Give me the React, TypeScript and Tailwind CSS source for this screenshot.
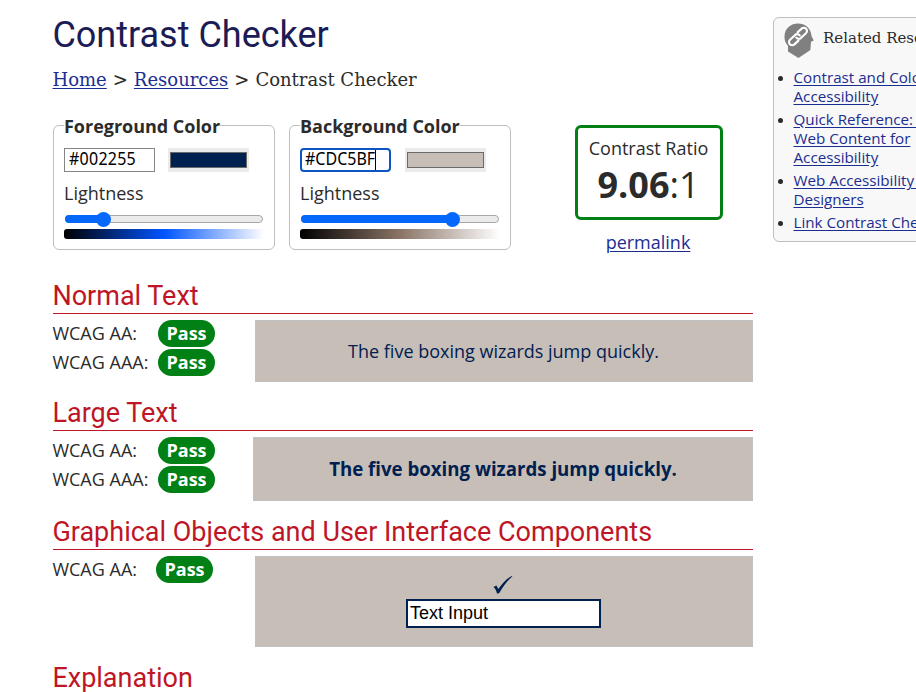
import React from "react";

type PickerProps = {
  title: string;
  value: string;
  focused?: boolean;
  swatch: string;
  gradient: string;
  fill: string;
};

function ColorPicker({ title, value, focused, swatch, gradient, fill }: PickerProps) {
  return (
    <fieldset className="h-[133px] w-[222px] rounded-[6px] border border-[#bfbfbf] px-[10px]">
      <legend className="h-[17px] whitespace-nowrap text-[18px] leading-[19px] font-bold tracking-[-0.02px]">{title}</legend>
      <div className={"mt-[14px] flex h-6 " + (focused ? "gap-[14px]" : "gap-[13px]")}>
        <div
          className={
            focused
              ? "flex w-[91px] rounded-[4px] border-2 border-[#0a56c4] bg-white pl-[3px] text-black"
              : "flex w-[91px] border border-[#858585] bg-white pt-px pl-1 tracking-[0.25px] text-black"
          }
        >
          <span className="origin-bottom scale-y-[1.08] font-['Noto_Sans','Open_Sans',sans-serif] text-[16px] leading-[18px]">{value}</span>
          {focused && <span className="h-5 w-px bg-black" />}
        </div>
        <div className="w-[81px] bg-[#ebebeb] px-[2px] py-1">
          <div className={"h-4 border border-[#6b6b6b] " + swatch} />
        </div>
      </div>
      <div className="mt-[8px] h-[26px] text-[18px] leading-[26px]">Lightness</div>
      <div className="mx-px mt-[9px] flex h-2 items-center rounded-full border border-[#a8a8a8] bg-[#ebebeb]">
        <div className={"-ml-px flex h-2 shrink-0 items-center justify-end rounded-full bg-[#0568fd] " + fill}>
          <span className="-mr-[7px] h-[15px] w-[15px] shrink-0 rounded-full bg-[#0568fd]" />
        </div>
      </div>
      <div className={"mt-[6px] h-[10px] rounded-[3px] bg-linear-to-r/srgb " + gradient} />
    </fieldset>
  );
}

function Heading({ children }: { children: React.ReactNode }) {
  return (
    <h2 className="h-[36px] border-b border-[#be1626] -indent-[0.6px] font-['Roboto',sans-serif] text-[27px] leading-[37px] whitespace-nowrap text-[#be1626]">
      {children}
    </h2>
  );
}

function Level({ name, width }: { name: string; width: string }) {
  return (
    <div className="flex h-[27px] items-center">
      <span className={"-indent-[0.6px] text-[18px] leading-[27px] whitespace-nowrap " + width}>{name}</span>
      <span className="h-[27px] w-[57px] rounded-full bg-[#008015] text-center text-[18px] leading-[27px] font-bold text-white">Pass</span>
    </div>
  );
}

const linkStyle = "text-[#1c2d91] underline underline-offset-2";

const related = [
  ["Contrast and Color", "Accessibility"],
  ["Quick Reference: Testing", "Web Content for", "Accessibility"],
  ["Web Accessibility for", "Designers"],
  ["Link Contrast Checker"],
];

function LinkHeadIcon() {
  return (
    <svg width="30" height="36" viewBox="0 0 30 36" className="shrink-0">
      <path fill="#808080" d="M.5 14C.5 5 7 .5 14 .5S27 5 27.500 13l2.200 4.500-2.700 1.200-.6 8.300L14.500 35 4 28.500v-5.500C1.500 20 .5 17.500 .5 14Z" />
      <g transform="rotate(-43 14 13.500)" fill="none" stroke="#fff" strokeWidth="2.100" strokeLinecap="round">
        <path d="M11.500 16.800H6a3.200 3.200 0 0 1 0-6.400h7a3.200 3.200 0 0 1 3 3.600" />
        <path d="M16.500 10.200H22a3.200 3.200 0 0 1 0 6.400h-7a3.200 3.200 0 0 1-3-3.600" />
      </g>
    </svg>
  );
}

export default function App() {
  return (
    <div className="flex h-[692px] w-[916px] overflow-hidden bg-white pl-[53px] font-['Open_Sans',sans-serif] text-[#2b2b2b]">
      <main className="w-[700px] shrink-0">
        <h1 className="mt-[12px] h-[46px] -indent-[0.6px] font-['Roboto',sans-serif] text-[36px] leading-[46px] whitespace-nowrap text-[#1b1b55]">
          Contrast Checker
        </h1>
        <nav className="mt-[10px] -ml-[0.5px] flex h-6 gap-[6px] font-['DejaVu_Serif',serif] text-[18px] leading-6 whitespace-nowrap">
          <a className={linkStyle}>Home</a>
          <span>&gt;</span>
          <a className={linkStyle}>Resources</a>
          <span>&gt;</span>
          <span>Contrast Checker</span>
        </nav>

        <div className="mt-[25px] flex h-[143px]">
          <ColorPicker title="Foreground Color" value="#002255" swatch="bg-[#002050]" gradient="from-black via-[#0055ff] to-white" fill="w-[38.5px]" />
          <div className="w-[14px]" />
          <ColorPicker title="Background Color" value="#CDC5BF" focused swatch="bg-[#c7beb8]" gradient="from-black via-[#8a7466] to-white" fill="w-[151.5px]" />
          <div className="mt-2 ml-[64px] w-[148px] text-center">
            <div className="h-[95px] rounded-[6px] border-3 border-[#008015] pt-[7px]">
              <div className="-indent-px text-[18px] leading-[26px] whitespace-nowrap">Contrast Ratio</div>
              <div className="h-[48px] -indent-px text-[36px] leading-[48px] whitespace-nowrap"><b>9.06</b>:1</div>
            </div>
            <div className="mt-[9px] pr-[2px] text-[18px] leading-[26px]">
              <a className={linkStyle}>permalink</a>
            </div>
          </div>
        </div>

        <section className="mt-[18px] h-[117px]">
          <Heading>Normal Text</Heading>
          <div className="mt-[6px] flex justify-between">
            <div className="flex flex-col gap-[2px]">
              <Level name="WCAG AA:" width="w-[105px]" />
              <Level name="WCAG AAA:" width="w-[105px]" />
            </div>
            <div className="h-[62px] w-[498px] border border-[#c1c1c1] bg-[#c7beb8] -indent-px text-center text-[18px] leading-[60px] text-[#002050]">
              The five boxing wizards jump quickly.
            </div>
          </div>
        </section>

        <section className="h-[119px]">
          <Heading>Large Text</Heading>
          <div className="mt-[6px] flex justify-between">
            <div className="flex flex-col gap-[2px]">
              <Level name="WCAG AA:" width="w-[105px]" />
              <Level name="WCAG AAA:" width="w-[105px]" />
            </div>
            <div className="h-[64px] w-[500px] border border-[#c1c1c1] bg-[#c7beb8] text-center text-[18.67px] leading-[62px] font-bold text-[#002050]">
              The five boxing wizards jump quickly.
            </div>
          </div>
        </section>

        <section className="h-[146px]">
          <Heading>Graphical Objects and User Interface Components</Heading>
          <div className="mt-[6px] flex justify-between">
            <Level name="WCAG AA:" width="w-[103px]" />
            <div className="flex h-[91px] w-[498px] flex-col items-center border border-[#c1c1c1] bg-[#c7beb8] pr-px">
              <svg width="20" height="18" viewBox="0 0 20 18" className="mt-[19px] mr-px">
                <path fill="#002050" d="M.5 11 3.400 9.500 5.300 13C9 8 14 2 19 0L19.300 .5C14 5 10 10.500 6.300 17L4.100 17.800C3.300 14.500 2.300 12.500 .5 11Z" />
              </svg>
              <div className="mt-[5px] mr-px h-[29px] w-[195px] border-2 border-[#002050] bg-white pl-[2.5px] font-['Liberation_Sans',sans-serif] text-[18px] leading-[25px] text-black">
                Text Input
              </div>
            </div>
          </div>
        </section>

        <h2 className="h-[36px] -indent-[0.6px] font-['Roboto',sans-serif] text-[27px] leading-[37px] text-[#be1626]">Explanation</h2>
      </main>

      <aside className="mt-[17px] ml-[20px] h-[225px] w-[210px] shrink-0 rounded-[6px] border border-[#bfbfbf] bg-[#f8f8f8]">
        <div className="mt-[5px] ml-[10px] flex h-[36px]">
          <LinkHeadIcon />
          <h2 className="ml-[9px] pt-[3px] font-['DejaVu_Serif',serif] text-[15px] leading-6 whitespace-nowrap">Related Resources</h2>
        </div>
        <ul className="mt-[9px] flex flex-col gap-1 text-[15.2px] leading-[19px]">
          {related.map((lines) => (
            <li key={lines[0]} className="flex">
              <span className="mt-[8px] mr-[11px] ml-[3.5px] h-[5px] w-[5px] shrink-0 rounded-full bg-[#2b2b2b]" />
              <a className={linkStyle}>
                {lines.map((line) => (
                  <span key={line} className="block whitespace-nowrap">{line}</span>
                ))}
              </a>
            </li>
          ))}
        </ul>
      </aside>
    </div>
  );
}
